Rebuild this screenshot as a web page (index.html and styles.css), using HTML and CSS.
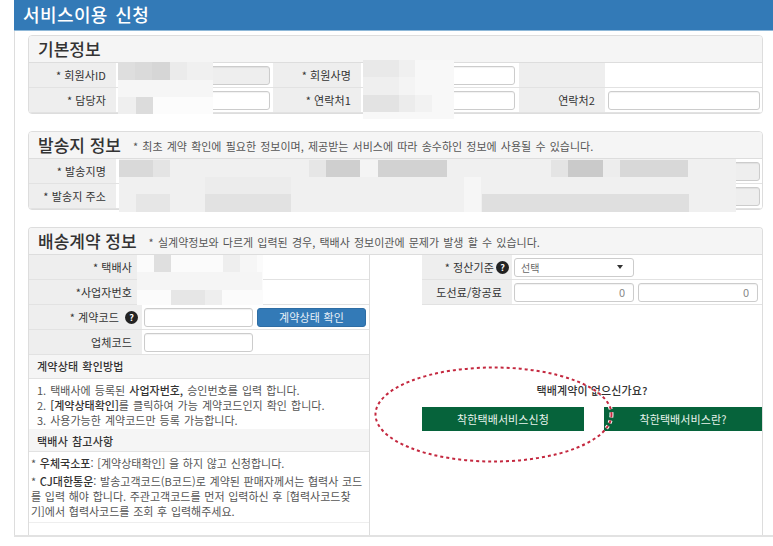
FILE: index.html
```html
<!DOCTYPE html>
<html lang="ko">
<head>
<meta charset="utf-8">
<title>서비스이용 신청</title>
<link rel="stylesheet" href="styles.css">
</head>
<body>
<div class="page">
  <h1 class="page-title">서비스이용 신청</h1>
  <main class="page-body">
    <section class="panel">
      <header class="panel-head"><h2>기본정보</h2></header>
      <div class="form-grid grid-basic">
        <div class="label">* 회원사ID</div>
        <div class="value"><input class="input input-off" readonly></div>
        <div class="label">* 회원사명</div>
        <div class="value value-mid"><input class="input"></div>
        <div class="label"></div>
        <div class="value value-end"></div>
        <div class="label">* 담당자</div>
        <div class="value"><input class="input"></div>
        <div class="label">* 연락처1</div>
        <div class="value value-mid"><input class="input"></div>
        <div class="label">연락처2</div>
        <div class="value value-end"><input class="input"></div>
      </div>
    </section>

    <section class="panel">
      <header class="panel-head"><h2>발송지 정보</h2><p>* 최초 계약 확인에 필요한 정보이며, 제공받는 서비스에 따라 송수하인 정보에 사용될 수 있습니다.</p></header>
      <div class="form-grid grid-sender">
        <div class="label">* 발송지명</div>
        <div class="value value-end"><input class="input input-off" readonly></div>
        <div class="label">* 발송지 주소</div>
        <div class="value value-end"><input class="input input-off" readonly></div>
      </div>
    </section>

    <section class="panel panel-last">
      <header class="panel-head"><h2>배송계약 정보</h2><p>* 실계약정보와 다르게 입력된 경우, 택배사 정보이관에 문제가 발생 할 수 있습니다.</p></header>
      <div class="contract">
        <div class="contract-left">
          <div class="form-grid grid-left">
            <div class="label">* 택배사</div>
            <div class="value"></div>
            <div class="label">*사업자번호</div>
            <div class="value"></div>
            <div class="label label-help">* 계약코드 <span class="help">?</span></div>
            <div class="value value-split"><input class="input input-code"><button class="btn-check" type="button">계약상태 확인</button></div>
            <div class="label">업체코드</div>
            <div class="value value-split"><input class="input input-code"></div>
          </div>
          <h3 class="sub-head">계약상태 확인방법</h3>
          <ol class="steps">
            <li>1. 택배사에 등록된 <b>사업자번호,</b> 승인번호를 입력 합니다.</li>
            <li>2. <b>[계약상태확인]</b>를 클릭하여 가능 계약코드인지 확인 합니다.</li>
            <li>3. 사용가능한 계약코드만 등록 가능합니다.</li>
          </ol>
          <h3 class="sub-head sub-head-b">택배사 참고사항</h3>
          <div class="notes">
            <p>* <b>우체국소포</b>: [계약상태확인] 을 하지 않고 신청합니다.</p>
            <p>* <b>CJ대한통운</b>: 발송고객코드(B코드)로 계약된 판매자께서는 협력사 코드를 입력 해야 합니다. 주관고객코드를 먼저 입력하신 후 [협력사코드찾기]에서 협력사코드를 조회 후 입력해주세요.</p>
          </div>
        </div>
        <div class="contract-right">
          <div class="form-grid grid-right">
            <div class="label label-tight">* 정산기준<span class="help">?</span></div>
            <div class="value value-split"><div class="select">선택<span class="caret"></span></div></div>
            <div class="label">도선료/항공료</div>
            <div class="value value-split"><input class="input input-num" value="0"><input class="input input-num" value="0"></div>
          </div>
          <div class="cta">
            <p class="cta-text">택배계약이 없으신가요?</p>
            <div class="cta-buttons">
              <button class="btn-green btn-apply" type="button">착한택배서비스신청</button>
              <button class="btn-green btn-about" type="button">착한택배서비스란?</button>
            </div>
          </div>
        </div>
      </div>
    </section>
  </main>
  <div class="page-foot"></div>
</div>

<svg class="overlay" width="773" height="546" viewBox="0 0 773 546" aria-hidden="true">
  <g shape-rendering="crispEdges">
    <rect x="118" y="62" width="95" height="52" fill="#f6f6f6"/>
    <rect x="118" y="62" width="17" height="18" fill="#dedede"/>
    <rect x="135" y="62" width="17" height="18" fill="#dadada"/>
    <rect x="152" y="62" width="18" height="18" fill="#d6d6d6"/>
    <rect x="170" y="62" width="17" height="18" fill="#ebebeb"/>
    <rect x="187" y="62" width="26" height="18" fill="#f0f0f0"/>
    <rect x="118" y="80" width="95" height="17" fill="#f6f6f6"/>
    <rect x="118" y="97" width="18" height="17" fill="#efefef"/>
    <rect x="136" y="97" width="17" height="17" fill="#dcdcdc"/>
    <rect x="153" y="97" width="60" height="17" fill="#fcfcfc"/>

    <rect x="363" y="60" width="91" height="59" fill="#f8f8f8"/>
    <rect x="363" y="60" width="36" height="17" fill="#e9e9e9"/>
    <rect x="399" y="60" width="16" height="17" fill="#f0f0f0"/>
    <rect x="363" y="77" width="36" height="18" fill="#efefef"/>
    <rect x="399" y="77" width="16" height="18" fill="#f4f4f4"/>
    <rect x="363" y="95" width="36" height="17" fill="#e3e3e3"/>
    <rect x="399" y="95" width="16" height="17" fill="#ececec"/>
    <rect x="415" y="95" width="17" height="17" fill="#f2f2f2"/>

    <rect x="119" y="159" width="617" height="53" fill="#f0f0f0"/>
    <rect x="119" y="160" width="34" height="17" fill="#d9d9d9"/>
    <rect x="153" y="160" width="17" height="17" fill="#e4e4e4"/>
    <rect x="309" y="160" width="17" height="17" fill="#e6e6e6"/>
    <rect x="326" y="160" width="34" height="17" fill="#cfcfcf"/>
    <rect x="360" y="160" width="18" height="17" fill="#f4f4f4"/>
    <rect x="378" y="160" width="69" height="17" fill="#d2d2d2"/>
    <rect x="551" y="160" width="17" height="17" fill="#e4e4e4"/>
    <rect x="568" y="160" width="35" height="17" fill="#cacaca"/>
    <rect x="603" y="160" width="17" height="17" fill="#ededed"/>
    <rect x="620" y="160" width="68" height="17" fill="#d8d8d8"/>
    <rect x="205" y="177" width="86" height="17" fill="#ececec"/>
    <rect x="136" y="194" width="34" height="18" fill="#e6e6e6"/>
    <rect x="205" y="194" width="86" height="18" fill="#e2e2e2"/>
    <rect x="464" y="177" width="17" height="35" fill="#f6f6f6"/>
    <rect x="482" y="194" width="207" height="18" fill="#dfdfdf"/>

    <rect x="137" y="255" width="126" height="50" fill="#fbfbfb"/>
    <rect x="154" y="255" width="17" height="17" fill="#dfdfdf"/>
    <rect x="223" y="255" width="17" height="17" fill="#eeeeee"/>
    <rect x="240" y="255" width="17" height="17" fill="#f6f6f6"/>
    <rect x="137" y="272" width="125" height="18" fill="#f5f5f5"/>
    <rect x="171" y="290" width="34" height="15" fill="#e6e6e6"/>
    <rect x="205" y="290" width="17" height="15" fill="#eeeeee"/>
  </g>
  <ellipse class="dots-halo" cx="493.5" cy="414.5" rx="118" ry="47"/>
  <ellipse class="dots" cx="493.5" cy="414.5" rx="118" ry="47"/>
</svg>
</body>
</html>
```

FILE: styles.css
```css
* { box-sizing: border-box; }
html, body { margin: 0; height: 546px; overflow: hidden; background: #fff; }
body {
  position: relative;
  font-family: "Noto Sans CJK KR", "Noto Sans", sans-serif;
  font-size: 11px;
  color: #333;
}
.page { margin-left: 14px; }
.page-title {
  margin: 0;
  height: 31px;
  padding-left: 9px;
  background: #337ab7;
  border-bottom: 1px solid #8fb8d8;
  color: #fff;
  font-size: 18px;
  font-weight: 500;
  letter-spacing: .4px;
  word-spacing: 2px;
  line-height: 28px;
}
.page-body {
  border-left: 1px solid #ddd;
  padding: 4px 10px 0 13px;
  height: 504px;
}
.panel {
  border: 1px solid #ddd;
  border-radius: 4px;
  margin-bottom: 17px;
  overflow: hidden;
}
.panel-last { margin-bottom: 0; height: 308px; border-bottom: 0; border-radius: 4px 4px 0 0; }
.panel-head {
  display: flex;
  align-items: center;
  height: 27px;
  padding-left: 9px;
  background: #f5f5f5;
  border-bottom: 1px solid #ddd;
}
.panel-head h2 { margin: -1px 0 0; font-size: 17px; font-weight: 500; line-height: 26px; color: #333; }
.panel-head p { margin: 1px 0 0 12px; font-size: 11px; word-spacing: 1.1px; color: #555; }

.form-grid { display: grid; grid-auto-rows: 25px; }
.grid-basic { grid-template-columns: 87px 157px 88px 158px 86px 157px; }
.grid-sender { grid-template-columns: 87px 646px; }
.grid-left { grid-template-columns: 113px 227px; }
.grid-right { grid-template-columns: 90px 1fr; }

.label {
  display: flex;
  align-items: center;
  justify-content: flex-end;
  gap: 3px;
  padding-right: 10px;
  background: #eee;
  border-bottom: 1px solid #e2e2e2;
  font-size: 11px;
  letter-spacing: .1px;
  color: #333;
}
.grid-left .label-help { padding-right: 4px; gap: 6px; }
.grid-right .label-tight { padding-right: 3px; gap: 2px; }
.value {
  display: flex;
  align-items: center;
  padding: 0 3px 0 5px;
  border-bottom: 1px solid #e2e2e2;
  background: #fff;
}
.value-mid { padding-right: 4px; }
.value-end { padding: 0 2px 0 3px; }
.value-split { gap: 4px; padding-left: 2px; }
.input {
  width: 100%;
  height: 19px;
  border: 1px solid #ccc;
  border-radius: 3px;
  background: #fff;
  font: inherit;
  color: #777;
  padding: 0 6px;
  box-shadow: inset 0 1px 1px rgba(0,0,0,.06);
}
.input-off { background: #eee; }
.input-code { width: 109px; flex: none; }
.input-num { width: 120px; flex: none; padding-right: 8px; text-align: right; font-size: 11px; color: #888; }
.help {
  display: inline-flex;
  align-items: center;
  justify-content: center;
  flex: none;
  width: 13px;
  height: 13px;
  border-radius: 50%;
  background: #222;
  color: #fff;
  font-size: 9px;
  font-weight: 700;
  line-height: 1;
}
.btn-check {
  flex: none;
  width: 109px;
  height: 19px;
  border: 1px solid #2e6da4;
  border-radius: 3px;
  background: #337ab7;
  color: #e8f0f7;
  font: inherit;
  padding: 0;
  letter-spacing: .2px;
}
.select {
  display: flex;
  align-items: center;
  justify-content: space-between;
  width: 120px;
  height: 19px;
  padding: 0 10px 0 6px;
  border: 1px solid #ccc;
  border-radius: 3px;
  background: #fff;
  font-size: 10px;
  color: #666;
}
.caret {
  width: 0;
  height: 0;
  border-left: 3.5px solid transparent;
  border-right: 3.5px solid transparent;
  border-top: 4px solid #333;
}

.contract { display: flex; height: 280px; }
.contract-left { flex: none; width: 341px; border-right: 1px solid #ddd; }
.contract-right { flex: 1; min-width: 0; padding-left: 52px; }
.sub-head {
  margin: 0;
  height: 24px;
  padding-left: 8px;
  background: #f5f5f5;
  border-bottom: 1px solid #e2e2e2;
  font-size: 11px;
  font-weight: 500;
  letter-spacing: .2px;
  word-spacing: .8px;
  line-height: 23px;
  color: #333;
}
.sub-head-b { height: 23px; line-height: 24px; }
.steps {
  list-style: none;
  margin: 0;
  padding: 4px 0 0 8px;
  height: 50px;
  font-size: 11px;
  word-spacing: 1px;
  line-height: 15px;
  color: #555;
}
.steps b, .notes b { font-weight: 500; color: #333; }
.notes {
  height: 71px;
  padding: 4px 5px 0 2px;
  border-bottom: 1px solid #eee;
  font-size: 11px;
  word-spacing: .6px;
  word-break: break-all;
  line-height: 15px;
  color: #555;
}
.notes p { margin: 0 0 3px; }

.cta { margin-top: 77px; }
.cta-text { margin: 0 0 9px; text-align: center; font-size: 11px; font-weight: 500; letter-spacing: .1px; line-height: 16px; color: #333; }
.cta-buttons { display: flex; justify-content: space-between; }
.btn-green {
  height: 24px;
  border: 0;
  background: #06633b;
  color: #e8f3ec;
  font: inherit;
  font-size: 11px;
  letter-spacing: .1px;
  padding: 0;
}
.btn-apply { width: 162px; }
.btn-about { width: 158px; }

.page-foot { border-top: 2px solid #e2e2e2; }

.overlay { position: absolute; left: 0; top: 0; pointer-events: none; }
.dots, .dots-halo { fill: none; stroke-dasharray: 3 3; }
.dots { stroke: #c4283f; stroke-width: 2; }
.dots-halo { stroke: #fff; stroke-width: 4; }
```
